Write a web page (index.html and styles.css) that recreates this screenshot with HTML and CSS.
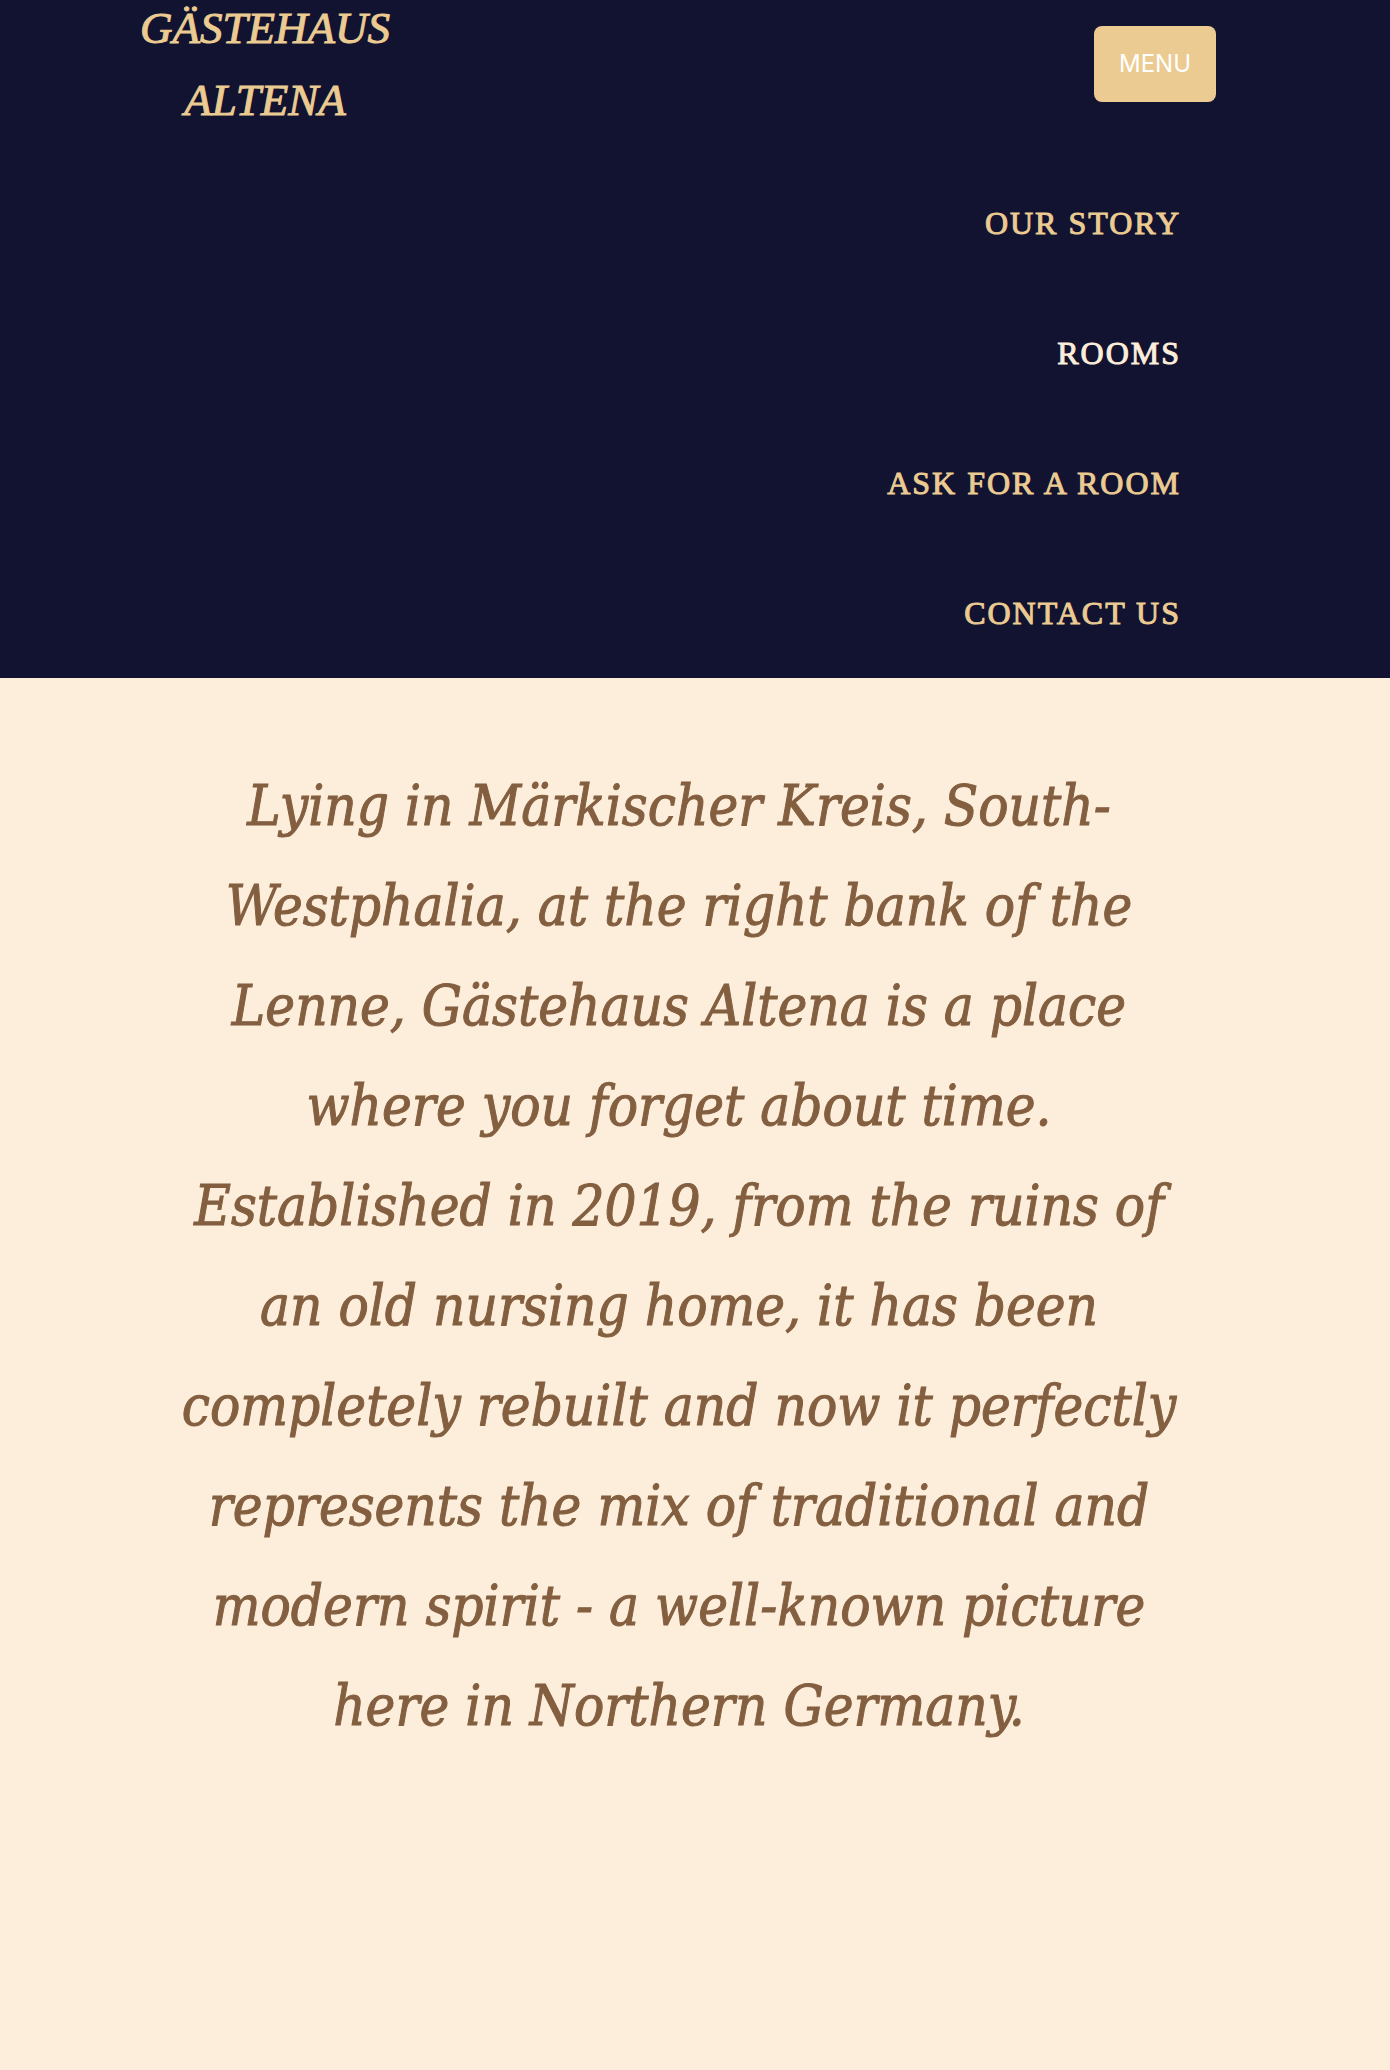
FILE: index.html
```html
<!DOCTYPE html>
<html lang="en">
<head>
  <meta charset="utf-8">
  <meta name="viewport" content="width=device-width, initial-scale=1">
  <title>Gästehaus Altena</title>
  <link rel="stylesheet" href="styles.css">
</head>
<body>
  <header class="header">
    <div class="header-bar">
      <a class="brand" href="#">Gästehaus Altena</a>
      <button class="menu-button" type="button" aria-expanded="true" aria-controls="site-nav">MENU</button>
    </div>
    <nav id="site-nav">
      <ul class="nav-list">
        <li><a class="nav-link" href="#story">Our story</a></li>
        <li><a class="nav-link nav-link-active" href="#rooms">Rooms</a></li>
        <li><a class="nav-link" href="#ask">Ask for a room</a></li>
        <li><a class="nav-link" href="#contact">Contact us</a></li>
      </ul>
    </nav>
  </header>
  <main class="main">
    <p class="intro">Lying in Märkischer Kreis, South-Westphalia, at the right bank of the Lenne, Gästehaus Altena is a place where you forget about time. Established in 2019, from the ruins of an old nursing home, it has been completely rebuilt and now it perfectly represents the mix of traditional and modern spirit - a well-known picture here in Northern Germany.</p>
  </main>
</body>
</html>
```
FILE: styles.css
```css
* {
  box-sizing: border-box;
}

body {
  margin: 0;
  background: #fdeddb;
  color: #835f40;
  font-family: "Liberation Serif", serif;
  -webkit-text-stroke: 1px currentColor;
}

.header {
  background: #121330;
}

.header-bar {
  display: flex;
  align-items: center;
  justify-content: space-between;
  height: 128px;
  padding: 0 174px 0 140px;
}

.brand {
  width: min-content;
  color: #ebcb92;
  font-size: 45px;
  font-style: italic;
  line-height: 72px;
  text-align: center;
  text-decoration: none;
  text-transform: uppercase;
}

.menu-button {
  padding: 24px 25px;
  border: 0;
  border-radius: 8px;
  background: #ebcb92;
  color: #fff;
  font: 24px/28px Inter, sans-serif;
  -webkit-text-stroke: 0;
}

.nav-list {
  margin: 0;
  padding: 30px 209px 0 0;
  list-style: none;
  text-align: right;
}

.nav-link {
  color: #ebcb92;
  font-size: 32px;
  letter-spacing: 2px;
  line-height: 130px;
  text-decoration: none;
  text-transform: uppercase;
}

.nav-link-active {
  color: #fdeddb;
}

.main {
  padding: 78px 196px 280px 164px;
}

.intro {
  margin: 0;
  font-family: "DejaVu Serif Condensed", "DejaVu Serif", serif;
  font-size: 56px;
  font-style: italic;
  line-height: 100px;
  text-align: center;
}
```
